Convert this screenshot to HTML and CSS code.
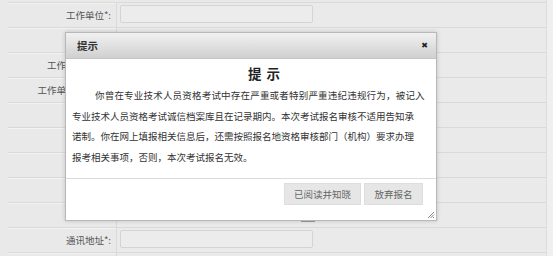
FILE: index.html
```html
<!DOCTYPE html>
<html lang="zh-CN">
<head>
<meta charset="utf-8">
<title>提示</title>
<link rel="stylesheet" href="styles.css">
</head>
<body>
<div class="page">
  <div class="form">
    <div class="row"><div class="label">工作单位*:</div><div class="field"><span class="input"></span></div></div>
    <div class="row"><div class="label"></div><div class="field"></div></div>
    <div class="row"><div class="label">工作单位性质*:</div><div class="field"></div></div>
    <div class="row"><div class="label">工作单位所在地*:</div><div class="field"></div></div>
    <div class="row"><div class="label"></div><div class="field"></div></div>
    <div class="row"><div class="label"></div><div class="field"></div></div>
    <div class="row"><div class="label"></div><div class="field"></div></div>
    <div class="row"><div class="label"></div><div class="field"></div></div>
    <div class="row"><div class="label"></div><div class="field"><span class="stub"></span></div></div>
    <div class="row"><div class="label">通讯地址*:</div><div class="field"><span class="input"></span></div></div>
    <div class="row"><div class="label"></div><div class="field"></div></div>
  </div>
</div>

<div class="dialog">
  <div class="dialog-head">
    <span class="dialog-title">提示</span>
    <span class="close">&#x2716;</span>
  </div>
  <div class="dialog-body">
    <h2 class="notice-title">提 示</h2>
    <p class="notice-text"><span class="line first">你曾在专业技术人员资格考试中存在严重或者特别严重违纪违规行为，被记入</span><span class="line">专业技术人员资格考试诚信档案库且在记录期内。本次考试报名审核不适用告知承</span><span class="line">诺制。你在网上填报相关信息后，还需按照报名地资格审核部门（机构）要求办理</span><span class="line">报考相关事项，否则，本次考试报名无效。</span></p>
  </div>
  <div class="dialog-foot">
    <button class="btn btn-wide">已阅读并知晓</button>
    <button class="btn btn-narrow">放弃报名</button>
  </div>
  <svg class="grip" width="8" height="8" viewBox="0 0 8 8">
    <path d="M7 1L1 7M7 3.5L3.5 7M7 6L6 7" stroke="#888" stroke-width="1" fill="none"/>
  </svg>
</div>
</body>
</html>
```
FILE: styles.css
```css
* { box-sizing: border-box; }
html, body { margin: 0; padding: 0; overflow: hidden; }
body {
  width: 553px;
  height: 256px;
  background: #efefef;
  font-family: "Noto Sans CJK SC", "Noto Sans", sans-serif;
  color: #333;
  position: relative;
}
.page {
  padding: 2px 0 0 8px;
  width: 547px;
  height: 256px;
  overflow: hidden;
  border-right: 1px solid #dcdcdc;
  background: #e9e9e9;
}
.form {
  border-top: 1px solid #dadada;
}
.row {
  display: flex;
  height: 25px;
  border-bottom: 1px solid #d9d9d9;
  box-shadow: inset 0 1px 0 #f3f3f3;
}
.label {
  width: 109px;
  flex: none;
  border-right: 1px solid #dadada;
  text-align: right;
  padding-right: 5px;
  font-size: 9.5px;
  line-height: 24px;
  color: #555;
  white-space: nowrap;
  overflow: hidden;
}
.field {
  flex: 1;
  padding: 2px 0 0 3px;
  background: #eaeaea;
}
.input {
  display: block;
  width: 193px;
  height: 18px;
  border: 1px solid #d4d4d4;
  border-radius: 2px;
  background: #ececec;
}
.stub {
  display: block;
  width: 14px;
  height: 2px;
  margin: 15px 0 0 181px;
  background: #9a9a9a;
}
.dialog {
  position: absolute;
  left: 65px;
  top: 32px;
  width: 372px;
  height: 189px;
  border: 1px solid #b8b8b8;
  background: #fff;
  box-shadow: 0 0 4px rgba(0,0,0,0.18);
  display: flex;
  flex-direction: column;
}
.dialog-head {
  height: 26px;
  flex: none;
  display: flex;
  align-items: center;
  justify-content: space-between;
  padding: 0 8px 0 11px;
  background: linear-gradient(#f1f1f1, #d0d0d0);
  border-bottom: 1px solid #c4c4c4;
}
.dialog-title {
  font-size: 10.5px;
  font-weight: bold;
  color: #333;
}
.close {
  font-size: 8px;
  color: #222;
  font-family: "DejaVu Sans", sans-serif;
}
.dialog-body {
  flex: 1;
  padding: 5px 20px 0 6px;
}
.notice-title {
  margin: 0;
  padding-left: 41px;
  text-align: center;
  font-size: 13.5px;
  line-height: 18px;
  font-weight: bold;
  letter-spacing: 1px;
  color: #222;
}
.notice-text {
  margin: 3px 0 0;
  font-size: 9.5px;
  line-height: 20.5px;
  color: #333;
}
.line {
  display: block;
  white-space: nowrap;
}
.line.first {
  padding-left: 23px;
  letter-spacing: 0.2px;
}
.dialog-foot {
  height: 42px;
  flex: none;
  border-top: 1px solid #dcdcdc;
  display: flex;
  justify-content: flex-end;
  align-items: flex-start;
  gap: 3px;
  padding: 4px 13px 0 0;
}
.btn {
  height: 22px;
  padding: 0;
  border: 1px solid #dedede;
  background: #e6e6e6;
  color: #666;
  font-family: inherit;
  font-size: 9.5px;
  white-space: nowrap;
  border-radius: 0;
}
.btn-wide { width: 77px; }
.btn-narrow { width: 59px; }
.grip {
  position: absolute;
  right: 1px;
  bottom: 1px;
}
```
